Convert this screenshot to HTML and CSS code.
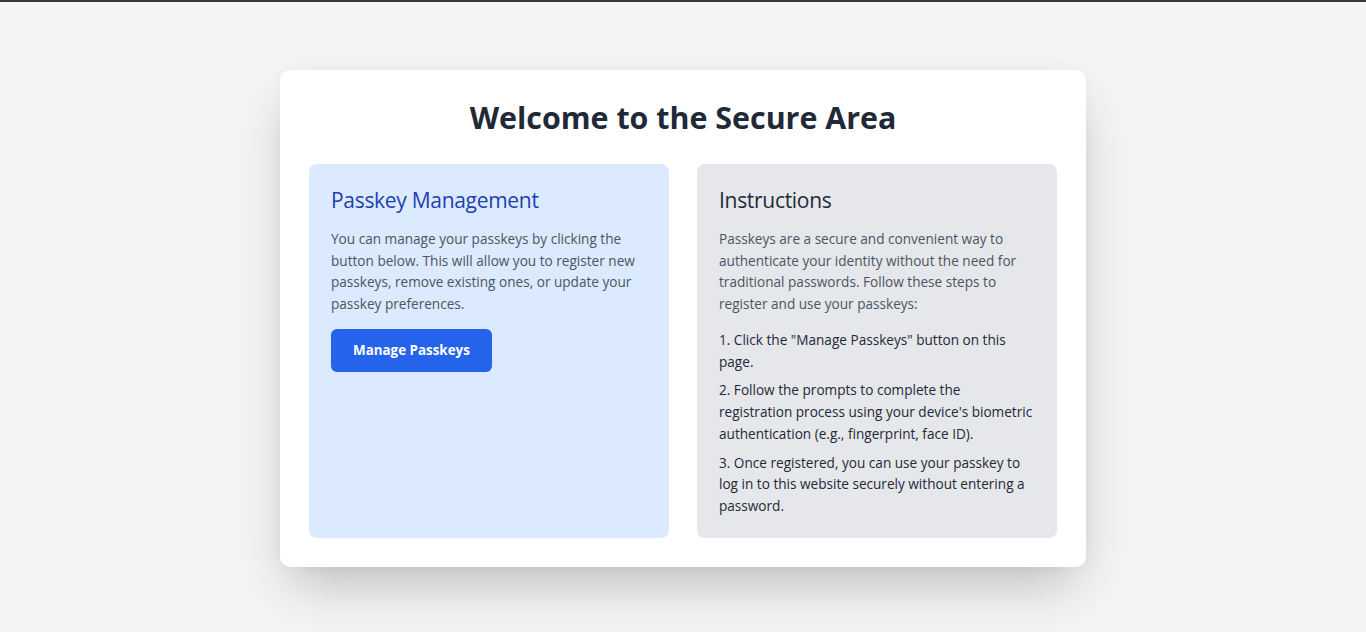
FILE: index.html
```html
<!DOCTYPE html>
<html lang="en">
<head>
<meta charset="utf-8">
<title>Secure Area</title>
<link rel="stylesheet" href="styles.css">
</head>
<body>
<div class="topbar"></div>
<main class="page">
  <section class="card">
    <h1 class="title">Welcome to the Secure Area</h1>
    <div class="columns">
      <div class="panel panel-blue">
        <h2 class="panel-title blue">Passkey Management</h2>
        <p class="text">You can manage your passkeys by clicking the button below. This will allow you to register new passkeys, remove existing ones, or update your passkey preferences.</p>
        <button class="btn" type="button">Manage Passkeys</button>
      </div>
      <div class="panel panel-gray">
        <h2 class="panel-title">Instructions</h2>
        <p class="text">Passkeys are a secure and convenient way to authenticate your identity without the need for traditional passwords. Follow these steps to register and use your passkeys:</p>
        <ol class="steps">
          <li>1. Click the "Manage Passkeys" button on this page.</li>
          <li>2. Follow the prompts to complete the registration process using your device's biometric authentication (e.g., fingerprint, face ID).</li>
          <li>3. Once registered, you can use your passkey to log in to this website securely without entering a password.</li>
        </ol>
      </div>
    </div>
  </section>
</main>
</body>
</html>
```
FILE: styles.css
```css
* { box-sizing: border-box; }
html, body { margin: 0; padding: 0; }
body {
  background: #f3f4f6;
  font-family: "Open Sans", "Noto Sans", sans-serif;
  color: #1f2937;
  min-height: 632px;
}
.topbar { height: 2px; background: #3a3a3a; }
.page {
  display: flex;
  justify-content: center;
  padding-top: 68px;
}
.card {
  width: 806px;
  background: #fff;
  border-radius: 10px;
  padding: 30px 29px 29px;
  box-shadow: 0 25px 50px -12px rgba(0,0,0,0.25), 0 0 12px rgba(0,0,0,0.03);
}
.title {
  margin: 0 0 28px;
  text-align: center;
  font-size: 30.4px;
  line-height: 36px;
  font-weight: 700;
  color: #1f2937;
}
.columns {
  display: grid;
  grid-template-columns: 1fr 1fr;
  gap: 28px;
}
.panel {
  border-radius: 8px;
  padding: 20px 22px 21px;
}
.panel-blue { background: #dbeafe; }
.panel-gray { background: #e5e7eb; }
.panel-title {
  margin: 0 0 12px;
  font-size: 21px;
  letter-spacing: -0.3px;
  line-height: 32px;
  font-weight: 500;
  color: #1f2937;
}
.panel-title.blue { color: #1e40af; }
.text {
  margin: 0;
  font-size: 13.6px;
  line-height: 21.7px;
  color: #4b5563;
}
.btn {
  margin-top: 14px;
  background: #2563eb;
  color: #fff;
  border: 0;
  border-radius: 6px;
  padding: 12px 22px;
  font-family: inherit;
  font-size: 13.4px;
  line-height: 19px;
  font-weight: 700;
}
.steps {
  list-style: none;
  margin: 14px 0 0;
  padding: 0;
  display: flex;
  flex-direction: column;
  gap: 7.2px;
  font-size: 13.6px;
  line-height: 21.7px;
  color: #1f2937;
}
```
